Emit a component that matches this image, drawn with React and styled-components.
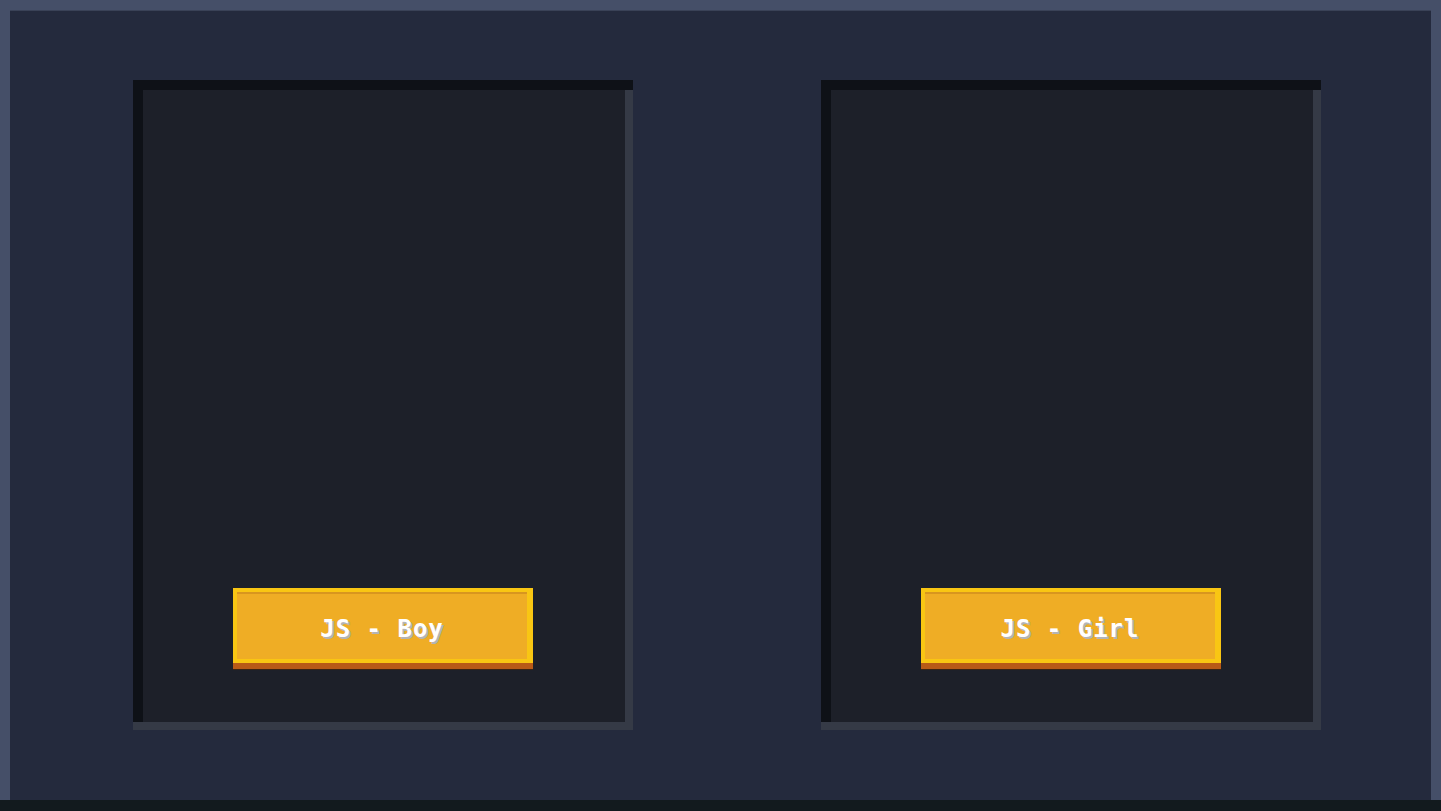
import React from 'react'
import styled, { createGlobalStyle } from 'styled-components'

/* -----------------------------------------------------COMPONENT------------------------------------------------ */

const characters = [{ name: 'JS - Boy' }, { name: 'JS - Girl' }]

export default function App() {
  return (
    <>
      <GlobalStyle />
      <Screen>
        <Frame>
          {characters.map((c) => (
            <CharacterCard key={c.name}>
              <SelectButton type="button">{c.name}</SelectButton>
            </CharacterCard>
          ))}
        </Frame>
        <BottomBar />
      </Screen>
    </>
  )
}

/* -----------------------------------------------------STYLE------------------------------------------------ */

const GlobalStyle = createGlobalStyle`
  html, body {
    margin: 0;
    padding: 0;
    background: #121a1e;
  }
  * {
    box-sizing: border-box;
  }
`

const Screen = styled.div`
  width: 100%;
  height: 100vh;
  display: flex;
  flex-direction: column;
  overflow: hidden;
`

const Frame = styled.main`
  flex: 1;
  display: flex;
  align-items: flex-start;
  gap: 188px;
  padding: 70px 110px 0 123px;
  background: #242a3d;
  border-top: 10px solid #454f68;
  border-left: 10px solid #454f68;
  border-right: 10px solid #454f68;
  box-shadow: inset 0 1px 0 #3a4257;
`

const BottomBar = styled.div`
  height: 11px;
  flex: 0 0 11px;
  background: #121a1e;
`

const CharacterCard = styled.section`
  width: 500px;
  height: 650px;
  display: flex;
  flex-direction: column;
  justify-content: flex-end;
  align-items: center;
  padding-bottom: 61px;
  background: #1d2029;
  box-shadow:
    inset 0 10px 0 #0e1117,
    inset 0 -8px 0 #353a46,
    inset 10px 0 0 #0e1117,
    inset -8px 0 0 #353a46;
`

const SelectButton = styled.button`
  width: 300px;
  height: 75px;
  margin-bottom: 6px;
  background: #efad25;
  border: 4px solid #f9c613;
  border-right-width: 6px;
  box-shadow:
    inset 0 2px 0 #d8961f,
    0 6px 0 #b85a17,
    0 7px 0 #3a2414;
  color: #ffffff;
  font-family: 'DejaVu Sans Mono', 'Liberation Mono', monospace;
  font-weight: 700;
  font-size: 24px;
  letter-spacing: 1px;
  padding: 6px 0 0 0;
  text-shadow: 2px 2px 0 #b4b4b4;
  cursor: pointer;
`
